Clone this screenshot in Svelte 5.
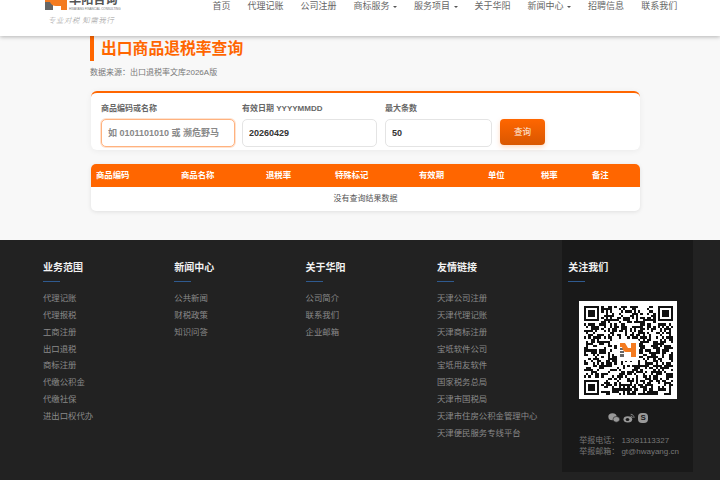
<script lang="ts">
  const navItems = [
    { label: '首页' },
    { label: '代理记账' },
    { label: '公司注册' },
    { label: '商标服务', caret: true },
    { label: '服务项目', caret: true },
    { label: '关于华阳' },
    { label: '新闻中心', caret: true },
    { label: '招聘信息' },
    { label: '联系我们' }
  ];

  const columns = ['商品编码', '商品名称', '退税率', '特殊标记', '有效期', '单位', '税率', '备注'];

  const footerColumns = [
    { title: '业务范围', links: ['代理记账', '代理报税', '工商注册', '出口退税', '商标注册', '代缴公积金', '代缴社保', '进出口权代办'] },
    { title: '新闻中心', links: ['公共新闻', '财税政策', '知识问答'] },
    { title: '关于华阳', links: ['公司简介', '联系我们', '企业邮箱'] },
    { title: '友情链接', links: ['天津公司注册', '天津代理记账', '天津商标注册', '宝坻软件公司', '宝坻用友软件', '国家税务总局', '天津市国税局', '天津市住房公积金管理中心', '天津便民服务专线平台'] }
  ];

  // fake QR: finder squares are real, the rest is seeded noise
  function buildQrPath(size: number) {
    let seed = 48271;
    const next = () => {
      seed = (seed * 16807) % 2147483647;
      return seed % 100 < 50;
    };
    const inFinder = (x: number, y: number, ox: number, oy: number) =>
      x >= ox - 1 && x <= ox + 7 && y >= oy - 1 && y <= oy + 7;
    const finderCell = (x: number, y: number, ox: number, oy: number) => {
      const dx = x - ox;
      const dy = y - oy;
      if (dx < 0 || dy < 0 || dx > 6 || dy > 6) return false;
      if (dx === 0 || dy === 0 || dx === 6 || dy === 6) return true;
      return dx >= 2 && dx <= 4 && dy >= 2 && dy <= 4;
    };
    const origins = [[0, 0], [size - 7, 0], [0, size - 7]];
    let d = '';
    for (let y = 0; y < size; y++) {
      for (let x = 0; x < size; x++) {
        let on = next();
        for (const [ox, oy] of origins) {
          if (inFinder(x, y, ox, oy)) on = finderCell(x, y, ox, oy);
        }
        if (on) d += `M${x} ${y}h1v1h-1z`;
      }
    }
    return d;
  }

  const qrPath = buildQrPath(41);
</script>

<div class="page">
  <header class="topbar">
    <div class="logo">
      <div class="logo-main">
        <svg class="logo-mark" viewBox="0 0 22 11" aria-hidden="true">
          <rect x="0" y="3" width="8" height="8" fill="#666" />
          <path d="M0 0h22v11h-6V7h-5Q6.500 7 5 3H0z" fill="#f47b20" />
        </svg>
        <div class="logo-words">
          <span class="logo-name">华阳咨询</span>
          <span class="logo-en">HWAYANG FINANCIAL CONSULTING</span>
        </div>
      </div>
      <span class="logo-slogan">专业对税 知需我行</span>
    </div>
    <nav class="nav">
      {#each navItems as item}
        <span class="nav-item">{item.label}{#if item.caret}<i class="caret"></i>{/if}</span>
      {/each}
    </nav>
  </header>

  <main class="main">
    <h1 class="title">出口商品退税率查询</h1>
    <p class="source">数据来源：出口退税率文库2026A版</p>

    <section class="search-card">
      <div class="field field-code">
        <label for="code">商品编码或名称</label>
        <input id="code" class="focused" type="text" placeholder="如 0101101010 或 濒危野马" />
      </div>
      <div class="field field-date">
        <label for="date">有效日期 YYYYMMDD</label>
        <input id="date" type="text" value="20260429" />
      </div>
      <div class="field field-limit">
        <label for="limit">最大条数</label>
        <input id="limit" type="text" value="50" />
      </div>
      <button class="query-btn">查询</button>
    </section>

    <section class="result-card">
      <div class="result-head">
        {#each columns as col}
          <span>{col}</span>
        {/each}
      </div>
      <div class="result-empty">没有查询结果数据</div>
    </section>
  </main>

  <footer class="footer">
    {#each footerColumns as col}
      <div class="foot-col">
        <h4>{col.title}</h4>
        <ul>
          {#each col.links as link}
            <li>{link}</li>
          {/each}
        </ul>
      </div>
    {/each}
    <div class="follow">
      <h4>关注我们</h4>
      <div class="qr">
        <svg class="qr-code" viewBox="0 0 41 41" shape-rendering="crispEdges" aria-hidden="true">
          <path d={qrPath} fill="#111" />
        </svg>
        <div class="qr-logo">
          <svg viewBox="0 0 16 14" aria-hidden="true">
            <path d="M0 5h4v2H0zM0 8h4v2H0zM0 11h4v3H0z" fill="#666" />
            <path d="M0 0h5l3 5h3V0h5v14h-5V9H6Q3 9 2 4H0z" fill="#f47b20" />
          </svg>
        </div>
      </div>
      <div class="social">
        <svg viewBox="0 0 14 12" aria-hidden="true">
          <ellipse cx="5.2" cy="4.6" rx="5" ry="4.2" fill="#999" />
          <ellipse cx="9.800" cy="7.600" rx="4" ry="3.400" fill="#999" stroke="#191919" stroke-width=".7" />
        </svg>
        <svg viewBox="0 0 14 12" aria-hidden="true">
          <ellipse cx="5.600" cy="7.600" rx="5.200" ry="3.800" fill="#999" />
          <ellipse cx="5.200" cy="7.800" rx="2.200" ry="1.800" fill="#191919" />
          <path d="M9 1.500a4 4 0 0 1 4 4.500M9 3.700a2 2 0 0 1 2 2.200" fill="none" stroke="#999" stroke-width="1" />
        </svg>
        <span class="skype">S</span>
      </div>
      <p class="contact">举报电话： 13081113327<br />举报邮箱： gt@hwayang.cn</p>
    </div>
  </footer>
</div>

<style>
  :global(body) {
    background: #f8f8f8;
    overflow: hidden;
  }

  .page {
    width: 720px;
    height: 480px;
    overflow: hidden;
    font-family: "Liberation Sans", "Noto Sans CJK SC", sans-serif;
  }

  .topbar {
    position: relative;
    z-index: 1;
    display: flex;
    height: 36px;
    background: #fff;
    box-shadow: 0 1px 4px rgba(0, 0, 0, 0.28);
    overflow: hidden;
  }

  .logo {
    display: flex;
    flex-direction: column;
    margin: -1px 0 0 45px;
    width: 167.5px;
  }

  .logo-main {
    display: flex;
    gap: 2px;
    height: 12px;
  }

  .logo-mark {
    width: 22px;
    height: 11px;
  }

  .logo-words {
    display: flex;
    flex-direction: column;
    margin-top: -6px;
  }

  .logo-name {
    font-size: 12.2px;
    line-height: 14px;
    font-weight: 700;
    color: #555;
  }

  .logo-en {
    font-size: 3px;
    line-height: 4px;
    color: #777;
    white-space: nowrap;
  }

  .logo-slogan {
    margin: 4px 0 0 3px;
    font-size: 7.4px;
    line-height: 10px;
    letter-spacing: 0.6px;
    color: #999;
    font-family: "Noto Sans CJK SC", sans-serif;
    font-weight: 300;
    font-style: italic;
  }

  .nav {
    display: flex;
    gap: 17px;
    height: 13px;
  }

  .nav-item {
    display: flex;
    align-items: center;
    font-size: 9px;
    line-height: 13px;
    color: #666;
    white-space: nowrap;
  }

  .caret {
    width: 0;
    height: 0;
    margin-left: 3.5px;
    border-left: 2px solid transparent;
    border-right: 2px solid transparent;
    border-top: 2px solid #555;
  }

  .main {
    width: 550px;
    height: 204px;
    margin-left: 90px;
  }

  .title {
    height: 25px;
    margin: 0;
    padding-left: 7px;
    border-left: 4px solid #f60;
    font-size: 15.8px;
    line-height: 25px;
    font-weight: 700;
    color: #f60;
  }

  .source {
    margin: 7px 0 0;
    font-size: 8px;
    line-height: 10px;
    color: #777;
  }

  .search-card {
    display: flex;
    align-items: flex-start;
    height: 59px;
    box-sizing: border-box;
    margin: 13px 0 0 1px;
    padding: 11px 0 0 10px;
    background: #fff;
    border-top: 2px solid #f60;
    border-radius: 6px;
    box-shadow: 0 1px 6px rgba(0, 0, 0, 0.06);
  }

  .field {
    display: flex;
    flex-direction: column;
    gap: 5px;
    margin-right: 7px;
  }

  .field-code {
    width: 134px;
  }

  .field-date {
    width: 135px;
    margin-right: 8px;
  }

  .field-limit {
    width: 107px;
    margin-right: 8px;
  }

  .field label {
    font-size: 8px;
    line-height: 10px;
    font-weight: 700;
    color: #666;
  }

  .field input {
    box-sizing: border-box;
    width: 100%;
    height: 28px;
    padding: 0 6px;
    border: 1px solid #e4e4e4;
    border-radius: 5px;
    background: #fff;
    outline: none;
    font-family: inherit;
    font-size: 9px;
    font-weight: 700;
    color: #333;
  }

  .field input.focused {
    border-color: #ffb27f;
    box-shadow: 0 0 0 1px #ffe3d0;
  }

  .field input::placeholder {
    color: #888;
  }

  .query-btn {
    width: 45px;
    height: 26px;
    margin-top: 15px;
    padding: 0 0 2px;
    border: none;
    border-radius: 4px;
    background: linear-gradient(180deg, #f60, #d95700);
    box-shadow: 0 2px 5px rgba(255, 102, 0, 0.25);
    font-family: inherit;
    font-size: 8.6px;
    font-weight: 400;
    color: #fff3e8;
  }

  .result-card {
    height: 47px;
    margin: 14px 0 0 1px;
    border-radius: 5px;
    background: #fff;
    box-shadow: 0 1px 4px rgba(0, 0, 0, 0.1);
    overflow: hidden;
  }

  .result-head {
    display: grid;
    grid-template-columns: 85px 85px 69px 84px 69px 53px 51px 53px;
    height: 23px;
    background: #f60;
  }

  .result-head span {
    padding-left: 5px;
    font-size: 8.4px;
    line-height: 23px;
    font-weight: 700;
    color: #fff;
  }

  .result-empty {
    height: 24px;
    font-size: 8px;
    line-height: 24px;
    text-align: center;
    color: #555;
  }

  .footer {
    display: flex;
    height: 240px;
    padding-left: 43px;
    box-sizing: border-box;
    background: #222;
  }

  .foot-col {
    width: 131.3px;
    padding-top: 21px;
  }

  h4 {
    width: max-content;
    margin: 0;
    padding-bottom: 7px;
    font-size: 10px;
    line-height: 14px;
    font-weight: 700;
    color: #f2f2f2;
    position: relative;
  }

  h4::after {
    content: '';
    position: absolute;
    left: 0;
    bottom: 0;
    width: 17px;
    height: 1px;
    background: #2f5a8f;
  }

  ul {
    list-style: none;
    margin: 8px 0 0;
    padding: 0;
  }

  li {
    font-size: 8.4px;
    line-height: 16.85px;
    color: #8a8a8a;
    white-space: nowrap;
  }

  .follow {
    width: 131px;
    height: 232px;
    margin-left: -6px;
    padding: 21px 0 0 6px;
    box-sizing: border-box;
    background: #191919;
  }

  .qr {
    position: relative;
    width: 98px;
    height: 98px;
    box-sizing: border-box;
    margin: 19px 0 0 11px;
    padding: 4.5px;
    background: #fff;
  }

  .qr-code {
    display: block;
    width: 89px;
    height: 89px;
  }

  .qr-logo {
    position: absolute;
    left: 38px;
    top: 38px;
    display: flex;
    align-items: center;
    justify-content: center;
    width: 22px;
    height: 22px;
    border-radius: 3px;
    background: #fff;
  }

  .qr-logo svg {
    width: 16px;
    height: 14px;
  }

  .social {
    display: flex;
    align-items: center;
    justify-content: center;
    gap: 3px;
    width: 98px;
    height: 12px;
    margin: 13px 0 0 11px;
  }

  .social svg {
    width: 12px;
    height: 10px;
  }

  .skype {
    width: 10px;
    height: 10px;
    border-radius: 4px;
    background: #999;
    font-size: 8px;
    line-height: 10px;
    font-weight: 700;
    text-align: center;
    color: #191919;
  }

  .contact {
    margin: 12px 0 0 11px;
    font-size: 8px;
    line-height: 10.6px;
    color: #777;
    white-space: nowrap;
  }
</style>
